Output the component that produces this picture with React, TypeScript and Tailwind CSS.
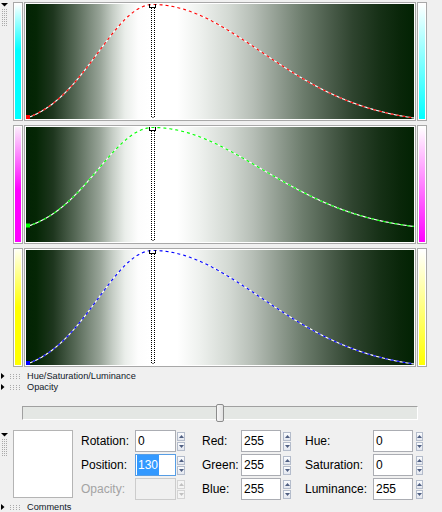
import type { ReactNode } from "react";

type Channel = {
  stroke: string;
  endY: number;
  leftBar: string;
  rightBar: string;
};

const channels: Channel[] = [
  {
    stroke: "#ff0000",
    endY: 114,
    leftBar: "bg-[linear-gradient(to_bottom,#ffffff,#00ffff_40%)]",
    rightBar: "bg-[linear-gradient(to_bottom,#ffffff,#00ffff)]",
  },
  {
    stroke: "#00ff00",
    endY: 99.5,
    leftBar: "bg-[linear-gradient(to_bottom,#fbeefb,#ff00ff_55%)]",
    rightBar: "bg-[linear-gradient(to_bottom,#ffffff,#ff00ff)]",
  },
  {
    stroke: "#0000ff",
    endY: 114,
    leftBar: "bg-[linear-gradient(to_bottom,#fffff0,#ffff00_50%)]",
    rightBar: "bg-[linear-gradient(to_bottom,#ffffff,#ffff00)]",
  },
];

// bell curve: narrow on the left of the stop, wide on the right
function curvePath(peakY: number, endY: number) {
  const px = 127;
  const pts: string[] = [];
  for (let x = 1; x <= 388; x += 1) {
    const left = x < px;
    const s = left ? 55 : 108;
    const dEnd = left ? px - 1 : 388 - px;
    const g = Math.exp(-((x - px) ** 2) / (2 * s * s));
    const gEnd = Math.exp(-(dEnd ** 2) / (2 * s * s));
    const f = (g - gEnd) / (1 - gEnd);
    const y = peakY + (endY - peakY) * (1 - f);
    pts.push(`${x},${y.toFixed(2)}`);
  }
  return "M" + pts.join(" L");
}

function Grip({ cols, rows, x0, y0, dx, dy }: { cols: number; rows: number; x0: number; y0: number; dx: number; dy: number }) {
  const dots: ReactNode[] = [];
  for (let r = 0; r < rows; r++) {
    for (let c = 0; c < cols; c++) {
      dots.push(<rect key={`${r}-${c}`} x={x0 + c * dx} y={y0 + r * dy} width={1} height={1} fill="#a9a9a9" />);
    }
  }
  return <>{dots}</>;
}

function ColorBar({ className }: { className: string }) {
  return (
    <div className="h-full w-[10px] border border-[#a8a8a8] bg-white p-px">
      <div className={`h-full w-full ${className}`} />
    </div>
  );
}

function CurvePanel({ channel }: { channel: Channel }) {
  const d = curvePath(0.5, channel.endY);
  const startY = channel.endY;

  return (
    <div className="flex h-[119px] gap-px">
      <ColorBar className={channel.leftBar} />
      <div className="h-full w-[392px] border border-[#a8a8a8] bg-white p-px">
        <svg
          width={388}
          height={115}
          viewBox="0 0 388 115"
          className="block bg-[linear-gradient(to_right,#022303_0%,#052605_2.6%,#1e361e_7%,#5a6c5a_13.1%,#98a498_19.1%,#c6cec6_22.4%,#eaeeea_25.5%,#fdfdfd_28.9%,#ffffff_32%,#ffffff_39%,#eef1ee_44.8%,#d2d8d2_52.6%,#b6beb6_58.5%,#8e9a8e_65.5%,#6c7c6c_71.4%,#4a5c4a_78.4%,#2e432e_84.3%,#163016_91.2%,#092609_96.4%,#022303_100%)]"
        >
          <path d={d} fill="none" stroke="#ffffff" strokeWidth={1.1} />
          <path d={d} fill="none" stroke={channel.stroke} strokeWidth={1.1} strokeDasharray="3 3" />
          <rect x={0} y={startY - 3} width={4} height={4} fill={channel.stroke} />
          <line x1={125.5} y1={4} x2={125.5} y2={113} stroke="#000" strokeDasharray="1 1" shapeRendering="crispEdges" />
          <line x1={128.5} y1={4} x2={128.5} y2={113} stroke="#000" strokeDasharray="1 1" shapeRendering="crispEdges" />
          <rect x={126.5} y={113} width={1} height={1} fill="#000" />
          <path d="M123.5,0 V3.5 H129.5 V0" fill="none" stroke="#000" shapeRendering="crispEdges" />
        </svg>
      </div>
      <ColorBar className={channel.rightBar} />
    </div>
  );
}

function SectionHeader({ title }: { title: string }) {
  return (
    <div className="flex h-[11px] items-center">
      <svg width={27} height={11} className="shrink-0">
        <polygon points="1,2 4.5,5 1,8" fill="#000" />
        <Grip cols={4} rows={3} x0={10} y0={3} dx={3} dy={2} />
      </svg>
      <span className="text-[9.2px] leading-[11px] text-[#101828]">{title}</span>
    </div>
  );
}

function Arrow({ up, color }: { up: boolean; color: string }) {
  return (
    <svg width={5} height={3}>
      <polygon points={up ? "0,3 2.5,0 5,3" : "0,0 2.5,3 5,0"} fill={color} />
    </svg>
  );
}

function Spinner({ className, disabled }: { className: string; disabled?: boolean }) {
  const btn = disabled
    ? "flex h-[9px] items-center justify-center border border-[#d4d4d4] bg-[#f4f4f4]"
    : "flex h-[9px] items-center justify-center border border-[#b4bccb] bg-[linear-gradient(to_bottom,#fbfcfe,#e3e7ef)]";
  const color = disabled ? "#c0c0c0" : "#4f5f82";
  return (
    <div className={`flex h-[22px] flex-col justify-center gap-px ${className}`}>
      <div className={btn}>
        <Arrow up color={color} />
      </div>
      <div className={btn}>
        <Arrow up={false} color={color} />
      </div>
    </div>
  );
}

type FieldProps = {
  label: string;
  value: string;
  labelWidth: string;
  inputWidth: string;
  spinner: string;
  selected?: boolean;
  disabled?: boolean;
};

function Field({ label, value, labelWidth, inputWidth, spinner, selected, disabled }: FieldProps) {
  return (
    <div className="flex h-[22px] items-center">
      <span className={`${labelWidth} text-[12px] ${disabled ? "text-[#a3a3a3]" : "text-black"}`}>{label}</span>
      {selected ? (
        <div className={`flex h-[22px] ${inputWidth} items-center border border-[#569de5] bg-white pl-px`}>
          <span className="flex h-[20px] items-center bg-[#3399ff] px-px text-[12px] text-white">{value}</span>
        </div>
      ) : (
        <div
          className={`flex h-[22px] ${inputWidth} items-center border pl-[2px] text-[12px] ${
            disabled ? "border-[#cccccc] bg-[#f0f0f0]" : "border-[#abadb3] bg-white"
          }`}
        >
          {value}
        </div>
      )}
      <Spinner className={spinner} disabled={disabled} />
    </div>
  );
}

export default function App() {
  return (
    <div className="h-[512px] w-[442px] overflow-hidden bg-[#f0f0f0] pt-[2px] font-['Liberation_Sans',Arial,sans-serif]">
      <div className="flex">
        <svg width={13} height={30} className="shrink-0">
          <polygon points="1,1 8,1 4.5,4.5" fill="#000" />
          <Grip cols={3} rows={9} x0={2} y0={7} dx={2} dy={2} />
        </svg>
        <div className="flex flex-col gap-[4px]">
          {channels.map((channel) => (
            <CurvePanel key={channel.stroke} channel={channel} />
          ))}
        </div>
      </div>

      <div className="mt-[4px]">
        <SectionHeader title="Hue/Saturation/Luminance" />
        <SectionHeader title="Opacity" />
      </div>

      <div className="relative ml-[22px] mt-[11px] flex h-[18px] w-[396px] items-center">
        <div className="h-[14px] w-full border border-t-[#a0a0a0] border-l-[#a0a0a0] border-b-white border-r-white bg-[#e4e7e4]" />
        <div className="absolute left-[194px] top-0 h-[18px] w-[8px] rounded-[2px] border border-[#8c8c8c] bg-[linear-gradient(to_right,#f7f7f7,#e2e2e2)]" />
      </div>

      <div className="mt-[8px] flex">
        <svg width={13} height={30} className="shrink-0">
          <polygon points="1,3 8,3 4.5,6.5" fill="#000" />
          <Grip cols={3} rows={9} x0={2} y0={9} dx={2} dy={2} />
        </svg>
        <div className="h-[68px] w-[60px] border border-[#b4b4b4] bg-white" />
        <div className="ml-[8px] flex flex-col gap-[2px]">
          <Field label="Rotation:" value="0" labelWidth="w-[54px]" inputWidth="w-[41px]" spinner="ml-px w-[8px]" />
          <Field label="Position:" value="130" labelWidth="w-[54px]" inputWidth="w-[41px]" spinner="ml-px w-[8px]" selected />
          <Field label="Opacity:" value="" labelWidth="w-[54px]" inputWidth="w-[41px]" spinner="ml-px w-[8px]" disabled />
        </div>
        <div className="ml-[17px] flex flex-col gap-[2px]">
          <Field label="Red:" value="255" labelWidth="w-[39px]" inputWidth="w-[40px]" spinner="ml-[2px] w-[8px]" />
          <Field label="Green:" value="255" labelWidth="w-[39px]" inputWidth="w-[40px]" spinner="ml-[2px] w-[8px]" />
          <Field label="Blue:" value="255" labelWidth="w-[39px]" inputWidth="w-[40px]" spinner="ml-[2px] w-[8px]" />
        </div>
        <div className="ml-[14px] flex flex-col gap-[2px]">
          <Field label="Hue:" value="0" labelWidth="w-[68px]" inputWidth="w-[40px]" spinner="ml-[3px] w-[7px]" />
          <Field label="Saturation:" value="0" labelWidth="w-[68px]" inputWidth="w-[40px]" spinner="ml-[3px] w-[7px]" />
          <Field label="Luminance:" value="255" labelWidth="w-[68px]" inputWidth="w-[40px]" spinner="ml-[3px] w-[7px]" />
        </div>
      </div>

      <div className="mt-[2px]">
        <SectionHeader title="Comments" />
      </div>
    </div>
  );
}
